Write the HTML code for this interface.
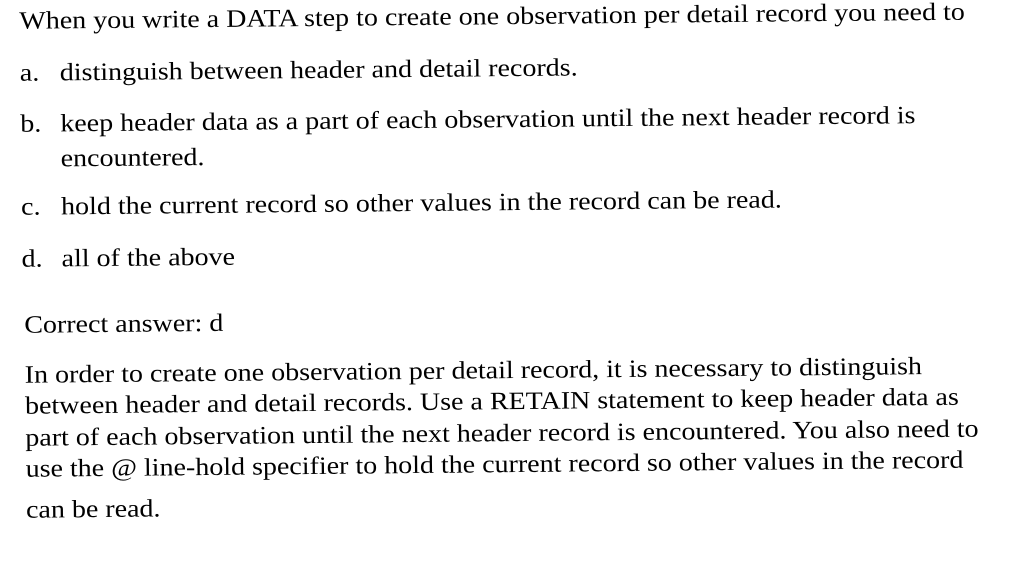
<!DOCTYPE html>
<html><head><meta charset="utf-8"><style>
html,body{margin:0;padding:0;background:#fff;width:1020px;height:576px;overflow:hidden}
#c{position:absolute;left:0;top:0;width:1020px;height:576px;transform:rotate(-0.55deg);transform-origin:0 300px}
.l{position:absolute;white-space:nowrap;font-family:"Liberation Serif",serif;font-size:25px;color:#000;line-height:28px;transform:scaleX(1.12);transform-origin:0 0}
</style></head><body><div id="c">
<div class="l" style="left:22px;top:8px">When you write a DATA step to create one observation per detail record you need to</div>
<div class="l" style="left:22px;top:60px">a.</div><div class="l" style="left:62px;top:60px">distinguish between header and detail records.</div>
<div class="l" style="left:22px;top:111px">b.</div><div class="l" style="left:62px;top:111px">keep header data as a part of each observation until the next header record is</div>
<div class="l" style="left:62px;top:146px">encountered.</div>
<div class="l" style="left:22px;top:194px">c.</div><div class="l" style="left:62px;top:194px">hold the current record so other values in the record can be read.</div>
<div class="l" style="left:22px;top:246px">d.</div><div class="l" style="left:62px;top:246px">all of the above</div>
<div class="l" style="left:24px;top:312px">Correct answer: d</div>
<div class="l" style="left:24px;top:362px">In order to create one observation per detail record, it is necessary to distinguish</div>
<div class="l" style="left:24px;top:393px">between header and detail records. Use a RETAIN statement to keep header data as</div>
<div class="l" style="left:24px;top:425px">part of each observation until the next header record is encountered. You also need to</div>
<div class="l" style="left:24px;top:456px">use the @ line-hold specifier to hold the current record so other values in the record</div>
<div class="l" style="left:24px;top:497px">can be read.</div>
</div></body></html>
